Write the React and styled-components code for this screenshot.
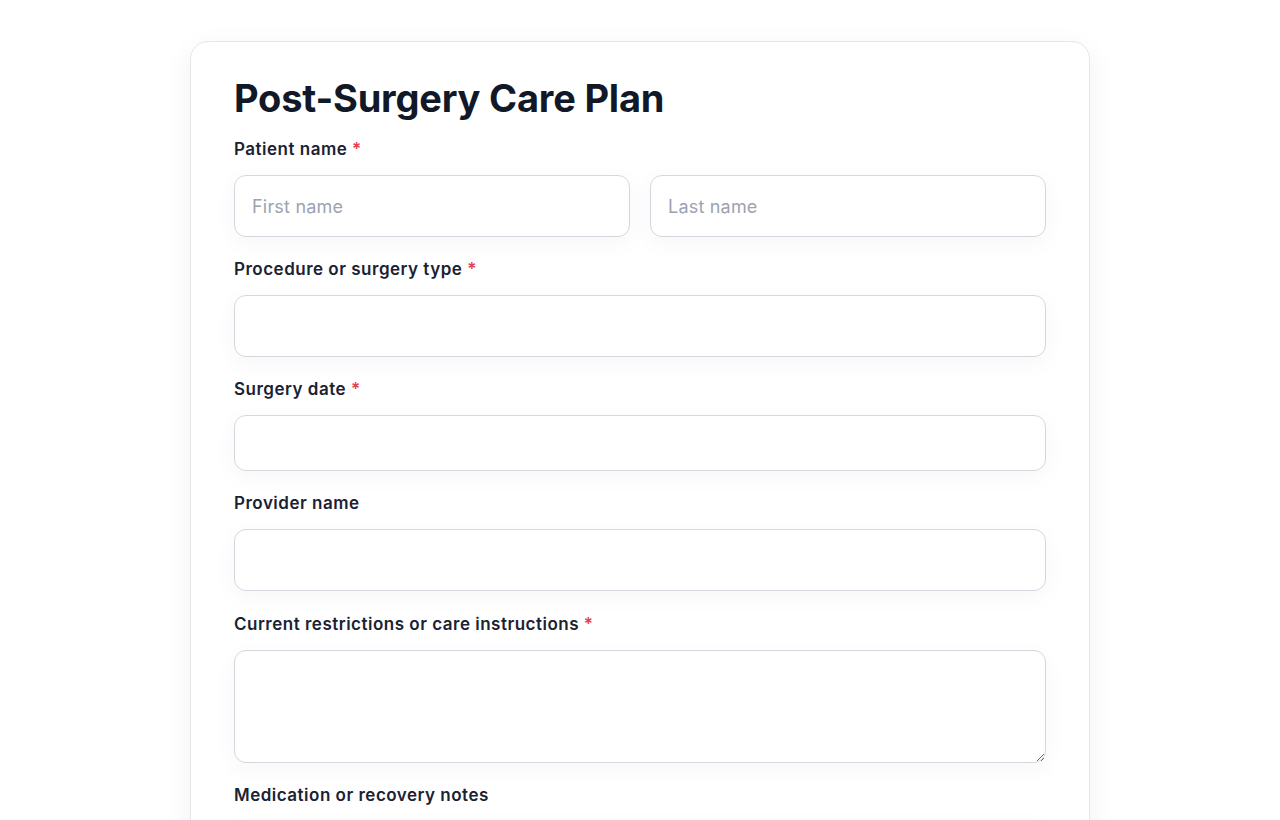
import React from 'react'
import styled, { createGlobalStyle } from 'styled-components'

const GlobalStyle = createGlobalStyle`
  * { box-sizing: border-box; }
  body {
    margin: 0;
    background: #ffffff;
    font-family: Inter, "Noto Sans", "Liberation Sans", sans-serif;
    color: #111827;
  }
`

export default function App() {
  return (
    <>
      <GlobalStyle />
      <Page>
        <Card>
          <Title>Post-Surgery Care Plan</Title>

          <Field>
            <Label>Patient name <Req>*</Req></Label>
            <Row>
              <Input placeholder='First name' />
              <Input placeholder='Last name' />
            </Row>
          </Field>

          <Field>
            <Label>Procedure or surgery type <Req>*</Req></Label>
            <Input />
          </Field>

          <Field>
            <Label>Surgery date <Req>*</Req></Label>
            <Input $h={56} />
          </Field>

          <Field>
            <Label>Provider name</Label>
            <Input />
          </Field>

          <Field $top={1}>
            <Label>Current restrictions or care instructions <Req>*</Req></Label>
            <TextArea />
          </Field>

          <Field>
            <Label>Medication or recovery notes</Label>
            <TextArea />
          </Field>
        </Card>
      </Page>
    </>
  )
}

const Page = styled.div`
  display: flex;
  justify-content: center;
  padding: 41px 0 40px;
`

const Card = styled.div`
  width: 900px;
  background: #fff;
  border: 1px solid #e5e7eb;
  border-radius: 18px;
  box-shadow: 0 8px 30px rgba(17, 24, 39, 0.06);
  padding: 33px 43px 44px;
  display: flex;
  flex-direction: column;
  gap: 21px;
`

const Title = styled.h1`
  margin: 0 0 -4px;
  font-size: 38px;
  line-height: 46px;
  font-weight: 700;
  letter-spacing: -0.2px;
  color: #111827;
`

const Field = styled.div`
  display: flex;
  flex-direction: column;
  gap: 15px;
  margin-top: ${(p) => p.$top || 0}px;
`

const Label = styled.label`
  font-size: 17px;
  line-height: 22px;
  font-weight: 600;
  letter-spacing: 0.5px;
  color: #1a2233;
`

const Req = styled.span`
  color: #e53e4f;
`

const Row = styled.div`
  display: grid;
  grid-template-columns: 1fr 1fr;
  gap: 20px;
`

const Input = styled.input`
  width: 100%;
  height: ${(p) => p.$h || 62}px;
  border: 1px solid #d4d7de;
  border-radius: 12px;
  padding: 0 17px;
  font-family: inherit;
  font-size: 18px;
  letter-spacing: 0.2px;
  color: #111827;
  background: #fff;
  box-shadow: 0 6px 24px rgba(17, 24, 39, 0.04);
  outline: none;
  &::placeholder {
    color: #9ca3af;
  }
`

const TextArea = styled.textarea`
  width: 100%;
  height: 113px;
  border: 1px solid #d4d7de;
  border-radius: 12px;
  padding: 14px 17px;
  font-family: inherit;
  font-size: 18px;
  background: #fff;
  box-shadow: 0 6px 24px rgba(17, 24, 39, 0.04);
  outline: none;
  resize: vertical;
  display: block;
`
